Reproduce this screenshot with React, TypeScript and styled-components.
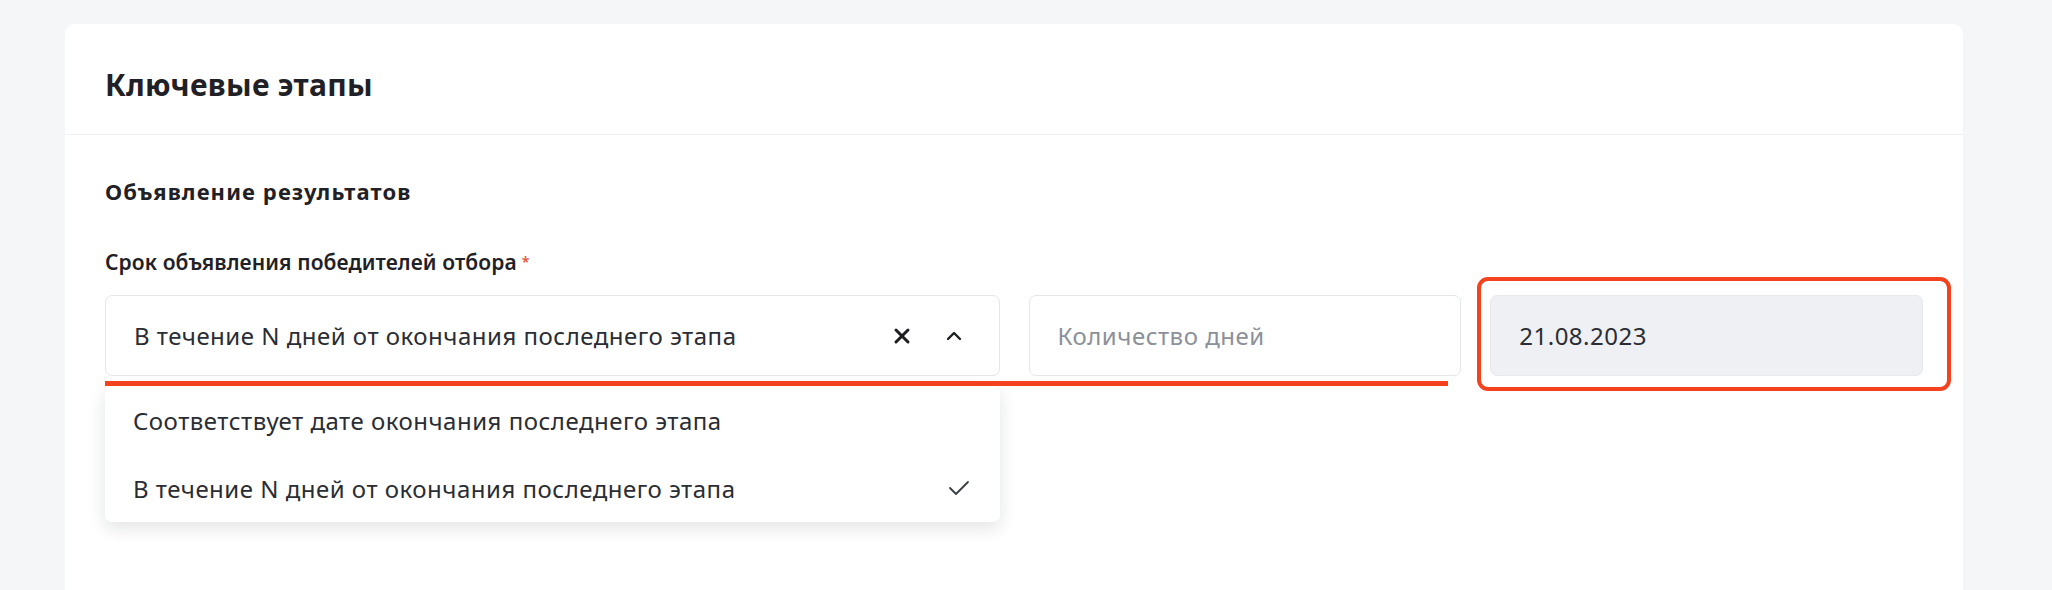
import styled, { createGlobalStyle } from 'styled-components';

const GlobalStyle = createGlobalStyle`
  body {
    margin: 0;
    background: #f5f6f8;
    font-family: "Noto Sans", "Open Sans", sans-serif;
    color: #23262b;
  }
`;

const Page = styled.div`
  padding: 24px 89px 0 65px;
  height: 590px;
  box-sizing: border-box;
  overflow: hidden;
`;

const Card = styled.section`
  background: #ffffff;
  border-radius: 10px;
  min-height: 620px;
`;

const CardHeader = styled.header`
  height: 111px;
  display: flex;
  align-items: center;
  padding: 11px 40px 0;
  box-sizing: border-box;
  border-bottom: 1px solid #f0f1f4;
`;

const Title = styled.h2`
  margin: 0;
  font-size: 30px;
  line-height: 40px;
  font-weight: 700;
  letter-spacing: 0.3px;
  color: #1f2126;
`;

const CardBody = styled.div`
  padding: 41px 40px 0;
`;

const SectionTitle = styled.h3`
  margin: 0;
  font-size: 22px;
  line-height: 30px;
  font-weight: 700;
  letter-spacing: 1.1px;
  color: #1f2126;
`;

const Label = styled.div`
  margin-top: 42px;
  font-size: 21px;
  line-height: 28px;
  font-weight: 600;
  letter-spacing: 0.1px;
  color: #1f2126;
`;

const Required = styled.span`
  color: #e5533d;
  font-size: 14px;
  vertical-align: top;
  margin-left: 5px;
`;

const Row = styled.div`
  position: relative;
  margin-top: 19px;
  display: grid;
  grid-template-columns: repeat(4, 1fr);
  column-gap: 29px;
`;

const Cell = styled.div<{ $span?: number }>`
  position: relative;
  grid-column: span ${(p) => p.$span ?? 1};
`;

const Field = styled.div<{ $disabled?: boolean; $placeholder?: boolean }>`
  height: 81px;
  box-sizing: border-box;
  display: flex;
  align-items: center;
  gap: 34px;
  padding: 0 36px 0 28px;
  border: 1px solid ${(p) => (p.$disabled ? '#e8e9ed' : '#e4e6ea')};
  border-radius: 7px;
  background: ${(p) => (p.$disabled ? '#eef0f4' : '#ffffff')};
  font-size: 24px;
  letter-spacing: 0.5px;
  color: ${(p) => (p.$placeholder ? '#8b9099' : '#2a2d33')};
`;

const FieldText = styled.span`
  flex: 1;
  white-space: nowrap;
`;

const IconButton = styled.span`
  display: flex;
  align-items: center;
  justify-content: center;
  color: #1c1e22;
`;

const Menu = styled.ul`
  position: absolute;
  top: calc(100% + 10px);
  left: 0;
  right: 0;
  margin: 0;
  padding: 0;
  list-style: none;
  background: #ffffff;
  border-radius: 7px;
  box-shadow: 0 6px 18px rgba(20, 24, 32, 0.12);
  z-index: 2;
`;

const MenuItem = styled.li`
  height: 68px;
  display: flex;
  align-items: center;
  justify-content: space-between;
  padding: 0 30px 0 28px;
  font-size: 24px;
  letter-spacing: 0.5px;
  color: #2a2d33;
`;

const Underline = styled.div`
  position: absolute;
  top: 86px;
  left: 0;
  width: 1343px;
  height: 5px;
  background: #f4411e;
  z-index: 3;
`;

const Highlight = styled.div`
  position: absolute;
  top: -18px;
  bottom: -15px;
  left: -13px;
  right: -28px;
  border: 4px solid #f4411e;
  border-radius: 11px;
  pointer-events: none;
`;

const CloseIcon = () => (
  <svg width="18" height="18" viewBox="0 0 18 18">
    <path d="M3 3 L15 15 M15 3 L3 15" stroke="currentColor" strokeWidth="3" strokeLinecap="round" />
  </svg>
);

const ChevronUp = () => (
  <svg width="18" height="12" viewBox="0 0 18 12">
    <path d="M3 9 L9 3 L15 9" fill="none" stroke="currentColor" strokeWidth="2.4" strokeLinecap="round" strokeLinejoin="round" />
  </svg>
);

const Check = () => (
  <svg width="22" height="18" viewBox="0 0 22 18">
    <path d="M2 9 L8 15 L20 3" fill="none" stroke="#3a3d42" strokeWidth="1.8" strokeLinecap="round" strokeLinejoin="round" />
  </svg>
);

const options = [
  { id: 'same', label: 'Соответствует дате окончания последнего этапа', selected: false },
  { id: 'days', label: 'В течение N дней от окончания последнего этапа', selected: true },
];

export default function App() {
  return (
    <>
      <GlobalStyle />
      <Page>
        <Card>
          <CardHeader>
            <Title>Ключевые этапы</Title>
          </CardHeader>
          <CardBody>
            <SectionTitle>Объявление результатов</SectionTitle>
            <Label>
              Срок объявления победителей отбора<Required>*</Required>
            </Label>
            <Row>
              <Cell $span={2}>
                <Field>
                  <FieldText>В течение N дней от окончания последнего этапа</FieldText>
                  <IconButton>
                    <CloseIcon />
                  </IconButton>
                  <IconButton>
                    <ChevronUp />
                  </IconButton>
                </Field>
                <Menu>
                  {options.map((o) => (
                    <MenuItem key={o.id}>
                      {o.label}
                      {o.selected && <Check />}
                    </MenuItem>
                  ))}
                </Menu>
              </Cell>
              <Cell>
                <Field $placeholder>
                  <FieldText>Количество дней</FieldText>
                </Field>
              </Cell>
              <Cell>
                <Field $disabled>
                  <FieldText>21.08.2023</FieldText>
                </Field>
                <Highlight />
              </Cell>
              <Underline />
            </Row>
          </CardBody>
        </Card>
      </Page>
    </>
  );
}
